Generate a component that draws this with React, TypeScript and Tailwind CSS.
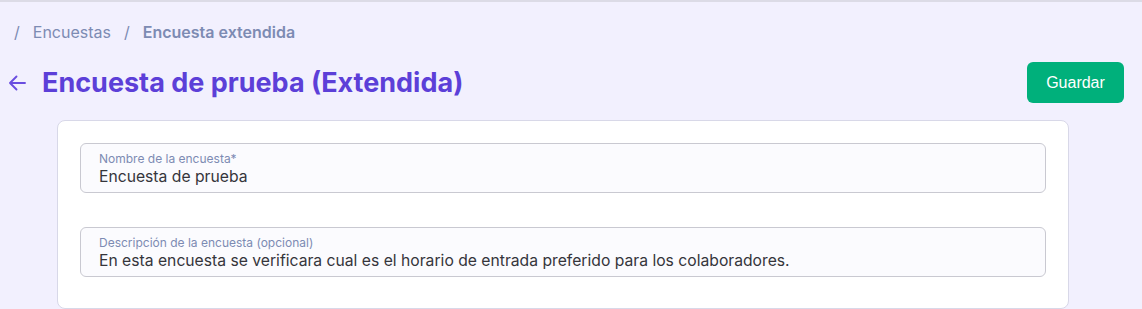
import React from 'react';

function Field({ label, value }: { label: string; value: string }) {
  return (
    <div className="h-[50px] rounded-md border border-[#c9c9d1] bg-[#fbfbfe] px-[18px] pt-[7px]">
      <div className="text-[12px] leading-[16px] text-[#7d8bb3]">{label}</div>
      <div className="text-[15.7px] leading-[19px] text-[#35353b]">{value}</div>
    </div>
  );
}

function BackArrow() {
  return (
    <svg width="18" height="16" viewBox="0 0 18 16" fill="none" className="text-[#6a4de0]">
      <path d="M17 8H2M8.5 1.5L2 8l6.5 6.5" stroke="currentColor" strokeWidth="1.9" strokeLinecap="round" strokeLinejoin="round" />
    </svg>
  );
}

export default function App() {
  return (
    <div
      className="min-h-screen w-full overflow-hidden border-t-2 border-[#dcdbe6] bg-[#f2f0fe]"
      style={{ fontFamily: 'Inter, "Noto Sans", sans-serif' }}
    >
      {/* Breadcrumb */}
      <div className="flex h-[60px] items-center gap-[13px] pl-[14px] text-[16px] text-[#7d8bb3]">
        <span>/</span>
        <span>Encuestas</span>
        <span>/</span>
        <span className="font-semibold">Encuesta extendida</span>
      </div>

      {/* Header */}
      <div className="flex items-center justify-between pl-[8px] pr-[18px]">
        <div className="flex items-center gap-[16px]">
          <BackArrow />
          <h1 className="text-[27px] font-bold leading-[40px] text-[#5c3fd8]">
            Encuesta de prueba (Extendida)
          </h1>
        </div>
        <button
          className="h-[41px] w-[97px] rounded-md bg-[#00b07b] text-[16px] text-white"
          style={{ fontFamily: '"Liberation Sans", Arial, sans-serif' }}
        >
          Guardar
        </button>
      </div>

      {/* Card */}
      <div className="ml-[57px] mt-[17px] w-[1012px] rounded-lg border border-[#d8d8e8] bg-white px-[22px] pb-[31px] pt-[22px]">
        <div className="flex flex-col gap-[34px]">
          <Field label="Nombre de la encuesta*" value="Encuesta de prueba" />
          <Field
            label="Descripción de la encuesta (opcional)"
            value="En esta encuesta se verificara cual es el horario de entrada preferido para los colaboradores."
          />
        </div>
      </div>
    </div>
  );
}
